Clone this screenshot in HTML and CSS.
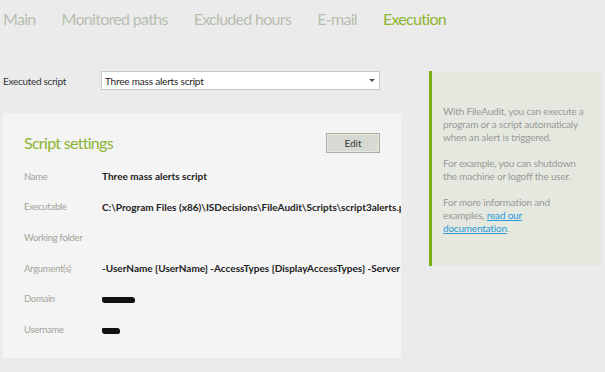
FILE: index.html
```html
<!DOCTYPE html>
<html lang="en">
<head>
    <meta charset="UTF-8">
    <title>FileAudit - Execution</title>
    <link rel="stylesheet" href="styles.css">
</head>
<body>
    <nav class="tabs">
        <span class="tab">Main</span>
        <span class="tab">Monitored paths</span>
        <span class="tab">Excluded hours</span>
        <span class="tab">E-mail</span>
        <span class="tab active">Execution</span>
    </nav>
    <div class="content">
        <div class="left-col">
            <div class="script-row">
                <label class="script-label">Executed script</label>
                <div class="select">
                    <span>Three mass alerts script</span>
                    <svg class="caret" viewBox="0 0 6 4" width="6" height="4"><polygon points="0,0 6,0 3,3" fill="#555"/></svg>
                </div>
            </div>
            <div class="card">
                <div class="card-header">
                    <div class="card-title">Script settings</div>
                    <button class="edit-btn">Edit</button>
                </div>
                <div class="field">
                    <div class="field-label">Name</div>
                    <div class="field-value">Three mass alerts script</div>
                </div>
                <div class="field">
                    <div class="field-label">Executable</div>
                    <div class="field-value">C:\Program Files (x86)\ISDecisions\FileAudit\Scripts\script3alerts.ps1</div>
                </div>
                <div class="field">
                    <div class="field-label">Working folder</div>
                    <div class="field-value"></div>
                </div>
                <div class="field">
                    <div class="field-label">Argument(s)</div>
                    <div class="field-value">-UserName {UserName} -AccessTypes {DisplayAccessTypes} -Server {Server}</div>
                </div>
                <div class="field">
                    <div class="field-label">Domain</div>
                    <div class="field-value"><span class="redacted redacted-domain"></span></div>
                </div>
                <div class="field">
                    <div class="field-label">Username</div>
                    <div class="field-value"><span class="redacted redacted-user"></span></div>
                </div>
            </div>
        </div>
        <aside class="help">
            <p>With FileAudit, you can execute a program or a script automaticaly when an alert is triggered.</p>
            <p>For example, you can shutdown the machine or logoff the user.</p>
            <p>For more information and examples, <a href="#">read our documentation</a>.</p>
        </aside>
    </div>
</body>
</html>
```
FILE: styles.css
```css
html, body {
    margin: 0;
    padding: 0;
    background-color: #ebebeb;
    font-family: Lato, "Open Sans", Arial, sans-serif;
}
body {
    padding-left: 3px;
}
.tabs {
    display: flex;
    gap: 26px;
    height: 36px;
    align-items: center;
    font-size: 16px;
    letter-spacing: -0.7px;
}
.tab {
    color: #b7bfae;
}
.tab.active {
    color: #8cb531;
}
.content {
    display: flex;
    align-items: flex-start;
    margin-top: 35px;
}
.left-col {
    width: 398px;
}
.script-row {
    display: flex;
    align-items: center;
    height: 19px;
}
.script-label {
    width: 98px;
    font-size: 10px;
    letter-spacing: -0.3px;
    color: #333;
}
.select {
    display: flex;
    align-items: center;
    justify-content: space-between;
    width: 270px;
    height: 17px;
    background-color: white;
    border: 1px solid #c9c9c9;
    padding: 0 4px 0 3px;
    font-size: 10px;
    letter-spacing: -0.2px;
    color: #222;
}
.card {
    margin-top: 23px;
    background-color: #f4f4f4;
    padding: 19px 21px 13px 21px;
    overflow: hidden;
}
.card-header {
    display: flex;
    justify-content: space-between;
    align-items: center;
    height: 21px;
    margin-bottom: 8px;
}
.card-title {
    font-size: 16px;
    letter-spacing: -0.7px;
    color: #8cb531;
}
.edit-btn {
    width: 54px;
    height: 20px;
    padding: 0;
    font-family: inherit;
    font-size: 10px;
    color: #333;
    background-color: #d7dad2;
    border: 1px solid #a9ada3;
    box-shadow: inset 0 0 0 1px #e6e8e2;
}
.field {
    display: flex;
    align-items: center;
    height: 30.6px;
    white-space: nowrap;
}
.field-label {
    width: 78px;
    flex-shrink: 0;
    font-size: 9.5px;
    letter-spacing: -0.3px;
    color: #a3a39a;
}
.field-value {
    font-size: 10px;
    font-weight: bold;
    color: #222;
}
.redacted {
    display: inline-block;
    background-color: #111;
    border-radius: 1px 3px 2px 3px;
    vertical-align: middle;
}
.redacted-domain {
    width: 33px;
    height: 6px;
}
.redacted-user {
    width: 18px;
    height: 6px;
}
.help {
    margin-left: 28px;
    width: 145px;
    background-color: #e5e8df;
    border-left: 3px solid #7aaf1a;
    padding: 34px 13px 31px 11px;
    font-size: 10px;
    letter-spacing: -0.2px;
    line-height: 13px;
    color: #999;
}
.help p {
    margin: 0 0 13px 0;
}
.help p:last-child {
    margin-bottom: 0;
}
.help a {
    color: #2a9ad8;
}
```
